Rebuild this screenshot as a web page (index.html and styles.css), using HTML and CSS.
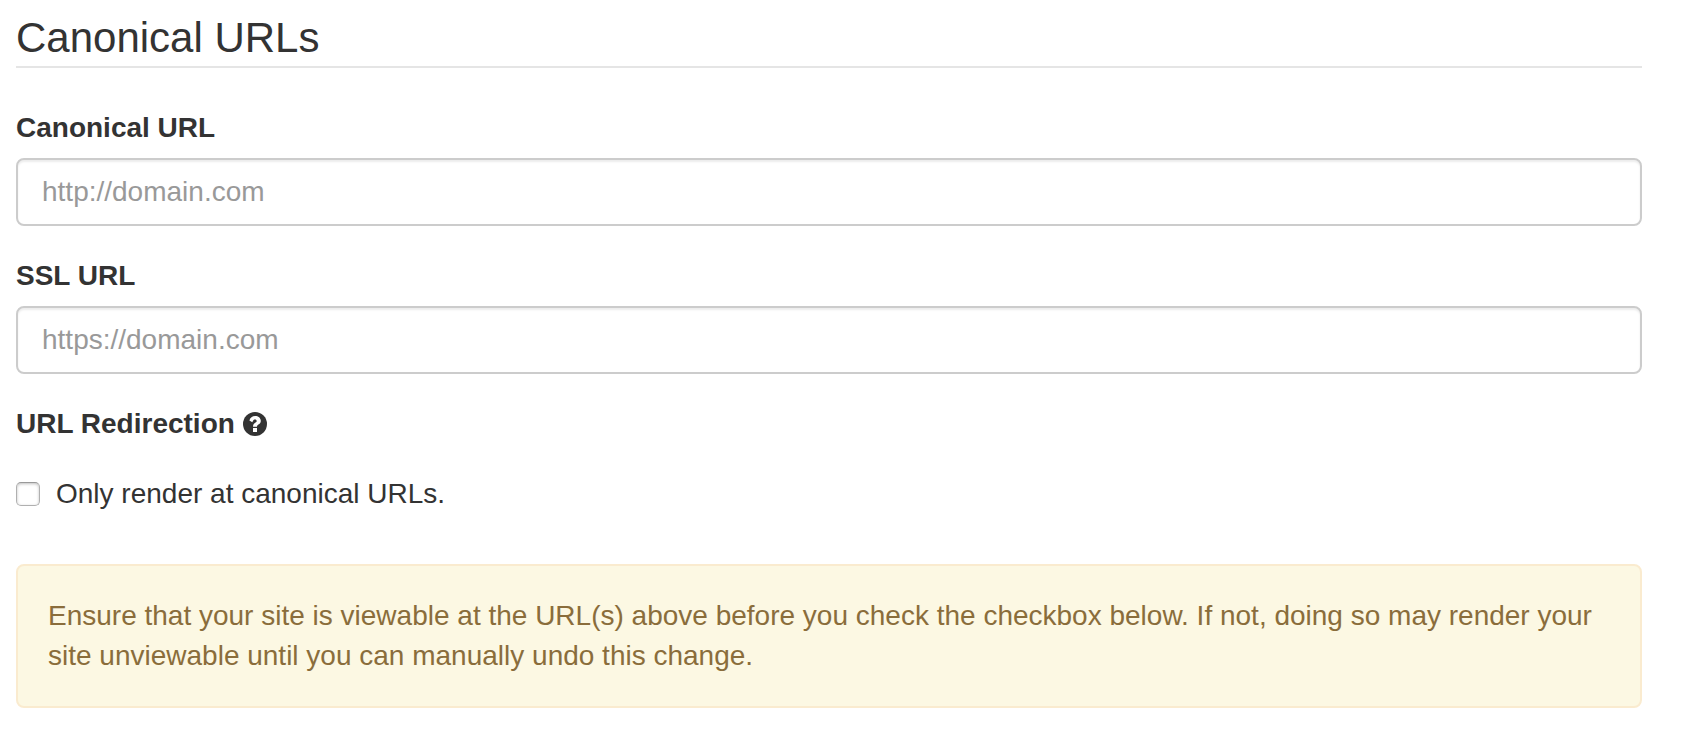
FILE: index.html
```html
<!DOCTYPE html>
<html lang="en">
<head>
<meta charset="utf-8">
<title>Canonical URLs</title>
<link rel="stylesheet" href="styles.css">
</head>
<body>
<form class="settings">
  <h2 class="settings-title">Canonical URLs</h2>
  <div class="field">
    <label class="field-label" for="canonical">Canonical URL</label>
    <input class="field-input" id="canonical" type="text" placeholder="http://domain.com">
  </div>
  <div class="field">
    <label class="field-label" for="ssl">SSL URL</label>
    <input class="field-input" id="ssl" type="text" placeholder="https://domain.com">
  </div>
  <div class="group-label">
    <span>URL Redirection</span>
    <svg class="help-icon" viewBox="0 0 24 24" aria-hidden="true">
      <circle cx="12" cy="12" r="12" fill="#333"/>
      <path d="M6.4 8.6C7.2 5.6 9.2 4 12.2 4C15.2 4 17.8 6 17.8 8.9C17.8 10.9 16.6 11.9 15.4 12.6C14.4 13.2 14 13.6 14 14.8H10C10 12.6 10.8 11.5 12.2 10.7C13.3 10.1 13.7 9.7 13.7 9C13.7 8.1 13 7.5 12 7.5C10.9 7.5 10.2 8 9.3 10.3Z" fill="#fff"/>
      <path d="M10 16h4v4h-4z" fill="#fff"/>
    </svg>
  </div>
  <div class="check">
    <input class="check-box" id="redirect" type="checkbox">
    <label for="redirect">Only render at canonical URLs.</label>
  </div>
  <div class="alert">Ensure that your site is viewable at the URL(s) above before you check the checkbox below. If not, doing so may render your site unviewable until you can manually undo this change.</div>
</form>
</body>
</html>
```
FILE: styles.css
```css
* { box-sizing: border-box; }
body {
  margin: 0;
  background: #fff;
  color: #333;
  font-family: "Liberation Sans", Arial, sans-serif;
  font-size: 28px;
  line-height: 40px;
}
.settings { padding: 12px 56px 36px 16px; }
.settings-title {
  margin: 0 0 40px;
  padding-bottom: 2px;
  border-bottom: 2px solid #e5e5e5;
  font-size: 42px;
  font-weight: 400;
  line-height: 52px;
}
.field { margin-bottom: 30px; }
.field-label { display: block; margin-bottom: 10px; font-weight: 700; }
.field-input {
  display: block;
  width: 100%;
  height: 68px;
  padding: 12px 24px;
  border: 2px solid #ccc;
  border-radius: 8px;
  background: #fff;
  box-shadow: inset 0 2px 2px rgba(0, 0, 0, 0.075);
  color: #555;
  font: inherit;
}
.field-input::placeholder { color: #999; opacity: 1; }
.group-label { display: flex; align-items: center; gap: 8px; font-weight: 700; }
.help-icon { width: 24px; height: 24px; }
.check { display: flex; align-items: center; gap: 16px; margin: 30px 0 50px; }
.check-box {
  appearance: none;
  width: 24px;
  height: 24px;
  margin: 0;
  border: 1px solid #b0b0b0;
  border-top-color: #999;
  border-radius: 5px;
  background: #fff;
  box-shadow: inset 0 1px 3px rgba(0, 0, 0, 0.25);
}
.check-box:checked { background: #337ab7; }
.alert {
  padding: 30px;
  border: 2px solid #faebcf;
  border-radius: 8px;
  background: #fcf8e3;
  color: #8a6d3b;
}
```
